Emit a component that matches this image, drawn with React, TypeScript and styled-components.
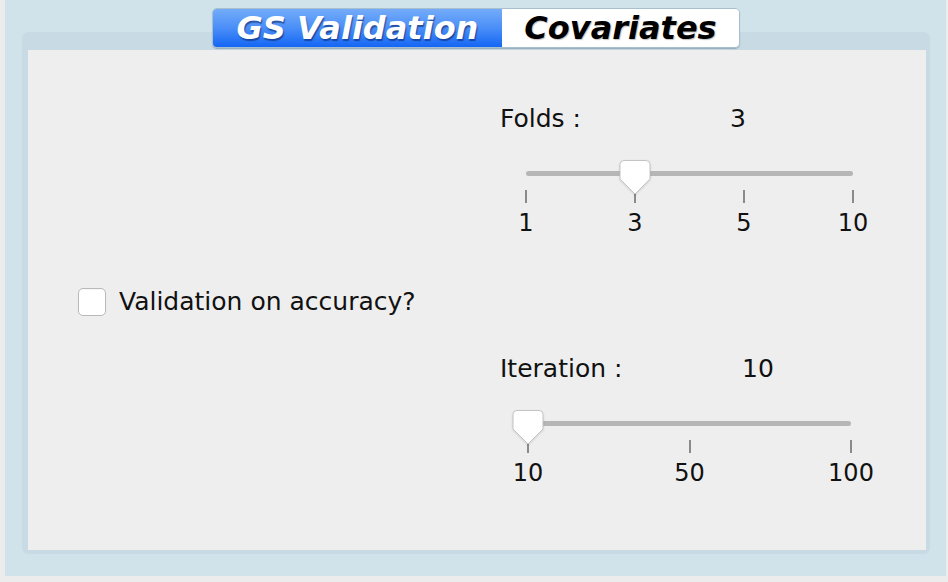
import styled, {createGlobalStyle} from "styled-components";

const GlobalStyle = createGlobalStyle`
    html, body {
        margin: 0;
        padding: 0;
        background: #ececec;
        font-family: "DejaVu Sans", "Liberation Sans", sans-serif;
    }
`

const Frame = styled.div`
    margin: 0 2px 0 5px;
    height: 576px;
    box-sizing: border-box;
    padding: 8px 16px 0 17px;
    background: #d0e3eb;
    display: flex;
    flex-direction: column;
`

const TabBar = styled.div`
    position: relative;
    z-index: 1;
    align-self: center;
    display: flex;
    height: 40px;
    box-sizing: border-box;
    border: 1px solid #a8bfcf;
    border-radius: 5px;
    overflow: hidden;
    box-shadow: 0 1px 1px rgba(60, 90, 110, 0.35);
`

const Tab = styled.div<{ $active?: boolean; $width: number }>`
    width: ${p => p.$width}px;
    display: flex;
    align-items: center;
    justify-content: center;
    font-size: 32px;
    font-weight: bold;
    font-style: italic;
    line-height: 38px;
    color: ${p => p.$active ? "#fff" : "#000"};
    background: ${p => p.$active
        ? "linear-gradient(#74acf9, #4a8ef7 50%, #1466f4)"
        : "#fff"};
    text-shadow: ${p => p.$active
        ? "1px 2px 1px rgba(10, 40, 110, 0.6)"
        : "1px 1px 1px rgba(0, 0, 0, 0.25)"};
`

const Panel = styled.div`
    margin-top: -16px;
    height: 522px;
    box-sizing: border-box;
    padding: 18px 4px 4px 6px;
    background: #c8dae3;
    border-radius: 6px;
`

const Content = styled.div`
    height: 500px;
    background: #eeeeee;
    display: flex;
    color: #111;
    font-size: 25px;
`

const LeftCol = styled.div`
    width: 472px;
    box-sizing: border-box;
    padding: 4px 0 0 50px;
    display: flex;
    align-items: center;
`

const CheckRow = styled.label`
    display: flex;
    align-items: center;
    gap: 13px;
    line-height: 28px;
`

const CheckBox = styled.span`
    width: 26px;
    height: 26px;
    background: #fff;
    border: 1px solid #b9b9b9;
    border-radius: 5px;
    box-shadow: inset 0 1px 0 rgba(0, 0, 0, 0.03);
`

const RightCol = styled.div`
    display: flex;
    flex-direction: column;
    gap: 118px;
    padding-top: 55px;
`

const Group = styled.div`
    display: flex;
    flex-direction: column;
`

const FieldRow = styled.div<{ $labelWidth: number }>`
    display: grid;
    grid-template-columns: ${p => p.$labelWidth}px auto;
    line-height: 28px;
    height: 28px;
`

const SliderBox = styled.div<{ $offset: number; $width: number }>`
    margin: 26px 0 0 ${p => p.$offset}px;
    width: ${p => p.$width}px;
`

const SliderBody = styled.div`
    position: relative;
    height: 31px;
`

const Track = styled.div`
    position: absolute;
    left: 0;
    right: 0;
    top: 12px;
    height: 5px;
    border-radius: 3px;
    background: #b6b6b6;
`

const ThumbSvg = styled.svg`
    position: absolute;
    top: 0;
    z-index: 1;
    filter: drop-shadow(0 1px 1px rgba(0, 0, 0, 0.12));
`

const TickRow = styled.div`
    display: flex;
    justify-content: space-between;
    margin: 0 -1px;
`

const Tick = styled.div`
    width: 2px;
    display: flex;
    flex-direction: column;
    align-items: center;
`

const TickMark = styled.div`
    width: 2px;
    height: 13px;
    background: #8a8a8a;
`

const TickLabel = styled.div`
    margin-top: 6px;
    line-height: 28px;
    font-size: 24px;
    white-space: nowrap;
`

const Thumb: React.FC<{ pct: number }> = ({pct}) => (
    <ThumbSvg width="32" height="36" viewBox="0 0 32 36" style={{left: `calc(${pct}% - 16px)`}}>
        <path d="M5 1.5 H27 Q31 1.5 31 5.5 V20 L16 35 L1 20 V5.5 Q1 1.5 5 1.5 Z"
              fill="#fff" stroke="#c4c4c4" strokeWidth="1"/>
    </ThumbSvg>
)

const SliderField: React.FC<{
    label: string;
    value: string;
    labelWidth: number;
    ticks: string[];
    index: number;
    offset: number;
    width: number;
}> = props => (<Group>
    <FieldRow $labelWidth={props.labelWidth}>
        <span>{props.label}</span>
        <span>{props.value}</span>
    </FieldRow>
    <SliderBox $offset={props.offset} $width={props.width}>
        <SliderBody>
            <Track/>
            <Thumb pct={props.index / (props.ticks.length - 1) * 100}/>
        </SliderBody>
        <TickRow>
            {props.ticks.map(t => (<Tick key={t}>
                <TickMark/>
                <TickLabel>{t}</TickLabel>
            </Tick>))}
        </TickRow>
    </SliderBox>
</Group>)

const App = () => (<>
    <GlobalStyle/>
    <Frame>
        <TabBar>
            <Tab $active $width={289}>GS Validation</Tab>
            <Tab $width={237}>Covariates</Tab>
        </TabBar>
        <Panel>
            <Content>
                <LeftCol>
                    <CheckRow>
                        <CheckBox/>
                        Validation on accuracy?
                    </CheckRow>
                </LeftCol>
                <RightCol>
                    <SliderField label="Folds :" value="3" labelWidth={230}
                                 ticks={["1", "3", "5", "10"]} index={1} offset={26} width={327}/>
                    <SliderField label="Iteration :" value="10" labelWidth={242}
                                 ticks={["10", "50", "100"]} index={0} offset={28} width={323}/>
                </RightCol>
            </Content>
        </Panel>
    </Frame>
</>)

export default App
